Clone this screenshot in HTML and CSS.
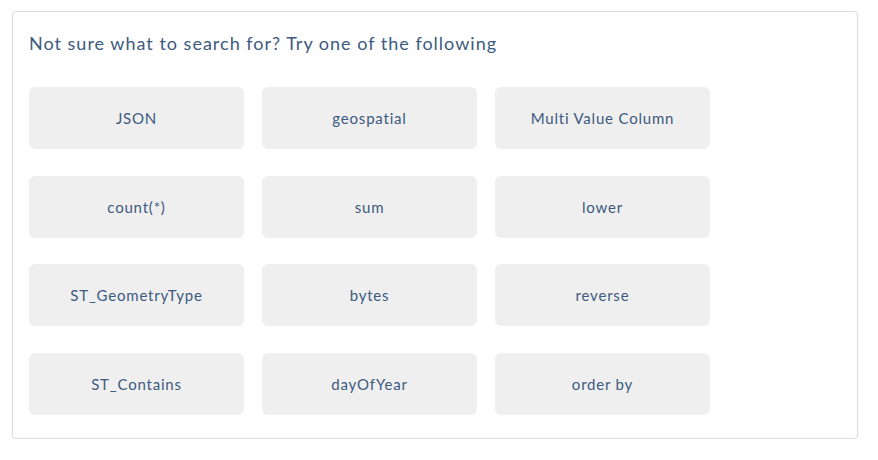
FILE: index.html
```html
<!DOCTYPE html>
<html>
<head>
<meta charset="utf-8">
<link rel="stylesheet" href="styles.css">
</head>
<body>
<div class="card">
  <div class="title">Not sure what to search for? Try one of the following</div>
  <div class="grid">
    <div class="chip">JSON</div>
    <div class="chip">geospatial</div>
    <div class="chip">Multi Value Column</div>
    <div class="chip">count(*)</div>
    <div class="chip">sum</div>
    <div class="chip">lower</div>
    <div class="chip">ST_GeometryType</div>
    <div class="chip">bytes</div>
    <div class="chip">reverse</div>
    <div class="chip">ST_Contains</div>
    <div class="chip">dayOfYear</div>
    <div class="chip">order by</div>
  </div>
</div>
</body>
</html>
```
FILE: styles.css
```css
html, body {
  margin: 0;
  padding: 0;
  background: #ffffff;
}
body {
  padding: 11px 20px 0 12px;
  font-family: Lato, "Open Sans", sans-serif;
  letter-spacing: 0.05em;
  color: #3d5a80;
}
.card {
  border: 1px solid #dddddd;
  border-radius: 4px;
  box-shadow: 0 1px 2px rgba(0,0,0,0.08);
  padding: 19px 16px 23px 16px;
  box-sizing: border-box;
  width: 846px;
}
.title {
  font-size: 18px;
  line-height: 24px;
  letter-spacing: 1px;
  margin-bottom: 32px;
}
.grid {
  display: grid;
  grid-template-columns: repeat(3, 215px);
  column-gap: 18px;
  row-gap: 26.5px;
}
.chip {
  height: 62px;
  background: #efefef;
  border-radius: 6px;
  display: flex;
  align-items: center;
  justify-content: center;
  font-size: 15px;
}
```
